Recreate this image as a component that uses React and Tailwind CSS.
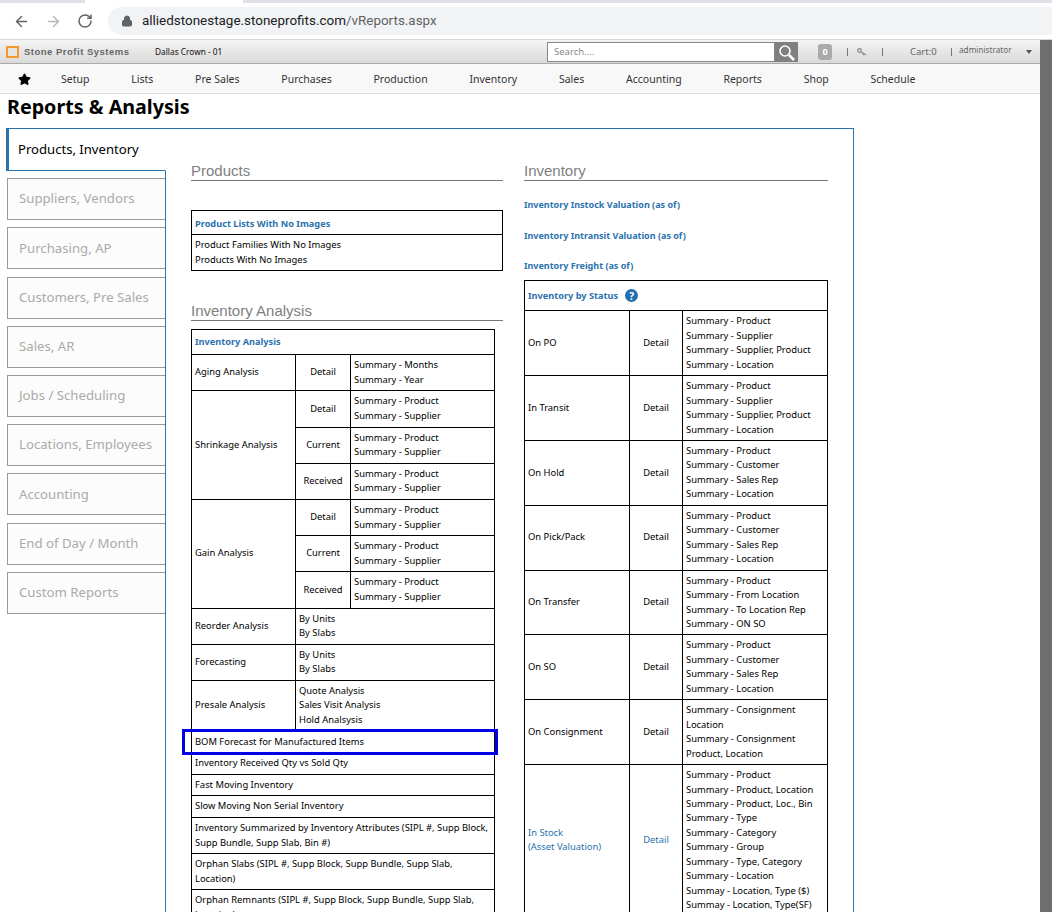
import React from 'react';
import { ArrowLeft, ArrowRight, RotateCw, Lock, Star } from 'lucide-react';

const navItems = ['Setup', 'Lists', 'Pre Sales', 'Purchases', 'Production', 'Inventory', 'Sales', 'Accounting', 'Reports', 'Shop', 'Schedule'];

const sideItems = [
  'Suppliers, Vendors',
  'Purchasing, AP',
  'Customers, Pre Sales',
  'Sales, AR',
  'Jobs / Scheduling',
  'Locations, Employees',
  'Accounting',
  'End of Day / Month',
  'Custom Reports',
];

const rightRows = [
  ['On PO', ['Product', 'Supplier', 'Supplier, Product', 'Location']],
  ['In Transit', ['Product', 'Supplier', 'Supplier, Product', 'Location']],
  ['On Hold', ['Product', 'Customer', 'Sales Rep', 'Location']],
  ['On Pick/Pack', ['Product', 'Customer', 'Sales Rep', 'Location']],
  ['On Transfer', ['Product', 'From Location', 'To Location Rep', 'ON SO']],
  ['On SO', ['Product', 'Customer', 'Sales Rep', 'Location']],
];

const cell = 'border border-black px-[3px] py-[3px] align-middle';

const Lines = ({ items }) => (
  <>
    {items.map((t, i) => (
      <div key={i}>{t}</div>
    ))}
  </>
);

const SectionTitle = ({ children, className }) => (
  <div className={`border-b border-[#777] text-[15px] leading-[18px] text-[#808080] font-['Liberation_Sans',sans-serif] ${className}`}>
    {children}
  </div>
);

const Divider = ({ className }) => <div className={`h-[8px] w-px bg-[#777] ${className}`}></div>;

const App = () => {
  return (
    <div className="relative h-[912px] w-[1052px] overflow-hidden bg-white font-['Noto_Sans',sans-serif] text-[9.4px] leading-[14.6px] text-black">
      {/* browser chrome */}
      <div className="relative h-[3px] bg-[#dee1e6]">
        <div className="absolute left-[85px] top-0 h-[3px] w-[158px] bg-white"></div>
      </div>
      <div className="flex h-[37px] items-center border-b border-[#d8d8d8] bg-white">
        <ArrowLeft size={17} strokeWidth={2} className="ml-[13px] text-[#5f6368]" />
        <ArrowRight size={17} strokeWidth={2} className="ml-[15px] text-[#b5b7ba]" />
        <RotateCw size={16} strokeWidth={2.2} className="ml-[15px] text-[#5f6368]" />
        <div className="ml-[15px] flex h-[28px] flex-1 items-center rounded-l-full bg-[#f1f3f4] pl-[13px] font-['Roboto',sans-serif] text-[13.45px] text-[#202124]">
          <Lock size={12} fill="#5f6368" className="text-[#5f6368]" />
          <span className="ml-[9px]">
            alliedstonestage.stoneprofits.com<span className="text-[#5f6368]">/vReports.aspx</span>
          </span>
        </div>
      </div>

      {/* top bar */}
      <div className="flex h-[24px] items-center border-b border-[#aaa] bg-gradient-to-b from-[#f4f4f4] to-[#d9d9d9] pt-[1px]">
        <div className="flex w-[155px] items-center pl-[6px]">
          <div className="h-[12px] w-[13px] border-2 border-[#f39a2b] bg-[#e4e4e4]"></div>
          <div className="ml-[5px] font-['Liberation_Sans',sans-serif] text-[9.5px] font-bold tracking-[0.5px] text-[#666]">Stone Profit Systems</div>
        </div>
        <div className="w-[392px] text-[8.3px] text-[#111]">Dallas Crown - 01</div>
        <div className="flex h-[20px] w-[228px] items-center border border-[#888] bg-white pl-[6px] text-[9.5px] text-[#888]">
          Search....
        </div>
        <div className="flex h-[20px] w-[23px] items-center justify-center bg-[#7f7f7f]">
          <svg width="19" height="19" viewBox="0 0 19 19" fill="none" stroke="white">
            <circle cx="8" cy="8" r="5" strokeWidth="1.6" />
            <path d="M12 12l5 5" strokeWidth="2.6" />
          </svg>
        </div>
        <div className="ml-[20px] flex h-[16px] w-[14px] items-center justify-center rounded-[3px] bg-[#aaa] text-[9px] font-bold text-white">0</div>
        <Divider className="ml-[15px]" />
        <svg width="11" height="8" viewBox="0 0 11 8" fill="none" stroke="#888" className="ml-[9px]">
          <circle cx="2.5" cy="2.5" r="1.8" strokeWidth="1.2" />
          <path d="M4 4l5 3M7 5.5l-1 1.5" strokeWidth="1.2" />
        </svg>
        <Divider className="ml-[14px]" />
        <div className="ml-[27px] w-[41px] text-[9.5px] text-[#666]">Cart:0</div>
        <Divider />
        <div className="-mt-[3px] ml-[7px] w-[67px] text-[8.2px] text-[#666]">administrator</div>
        <div className="h-0 w-0 border-x-[3.5px] border-t-[4px] border-x-transparent border-t-[#555]"></div>
      </div>

      {/* nav */}
      <div className="flex h-[30px] items-center border-b border-[#ddd] bg-[#f8f8f8] pt-[1px] text-[10.5px] text-[#333]">
        <Star size={13} fill="black" className="ml-[18px] mr-[30px] text-black" />
        <div className="flex gap-[41.8px]">
          {navItems.map((label) => (
            <div key={label}>{label}</div>
          ))}
        </div>
      </div>

      {/* scrollbar strip */}
      <div className="absolute right-0 top-[40px] h-[872px] w-[12px] bg-[#6e6e6e]"></div>

      <h1 className="ml-[7px] mt-[1px] h-[33px] text-[19.7px] font-bold leading-[24px] text-black">Reports &amp; Analysis</h1>

      {/* report box */}
      <div className="ml-[6px] flex h-[800px] w-[848px] border-r border-t border-[#2a72ae]">
        <div className="w-[160px] shrink-0 border-r border-[#2a72ae]">
          <div className="-mr-[1px] flex h-[42px] items-center border-b border-l-[3px] border-r border-[#2a72ae] border-r-white bg-white pl-[9px] text-[13.1px] text-black">
            Products, Inventory
          </div>
          {sideItems.map((s) => (
            <div key={s} className="ml-[1px] mt-[7.2px] flex h-[42px] items-center border-y border-l border-[#999] bg-[#fcfcfc] pb-[1px] pl-[11px] text-[13.2px] text-[#aaa]">
              {s}
            </div>
          ))}
        </div>

        <div className="flex min-w-0 flex-1">
          {/* left column */}
          <div className="ml-[25px] w-[312px]">
            <SectionTitle className="mt-[33px]">Products</SectionTitle>
            <table className="mt-[29px] w-[312px] border-collapse">
              <tbody>
                <tr>
                  <td className="h-[24px] border border-black px-[3px] pb-[1px] pt-[5px] text-[9.2px] font-bold text-[#2a72ae]">Product Lists With No Images</td>
                </tr>
                <tr>
                  <td className={cell}>
                    <div>Product Families With No Images</div>
                    <div>Products With No Images</div>
                  </td>
                </tr>
              </tbody>
            </table>

            <SectionTitle className="mt-[31px]">Inventory Analysis</SectionTitle>
            <table className="mt-[8px] w-[304px] table-fixed border-collapse">
              <colgroup>
                <col className="w-[104px]" />
                <col className="w-[55px]" />
                <col />
              </colgroup>
              <tbody>
                <tr>
                  <td colSpan={3} className="h-[25px] border border-black px-[3px] text-[9.2px] font-bold text-[#2a72ae]">Inventory Analysis</td>
                </tr>
                <tr>
                  <td className={cell}>Aging Analysis</td>
                  <td className={`${cell} text-center`}>Detail</td>
                  <td className={cell}><Lines items={['Summary - Months', 'Summary - Year']} /></td>
                </tr>
                {['Shrinkage Analysis', 'Gain Analysis'].map((name) =>
                  ['Detail', 'Current', 'Received'].map((d, i) => (
                    <tr key={name + d}>
                      {i === 0 && <td rowSpan={3} className={cell}>{name}</td>}
                      <td className={`${cell} text-center`}>{d}</td>
                      <td className={cell}><Lines items={['Summary - Product', 'Summary - Supplier']} /></td>
                    </tr>
                  ))
                )}
                <tr>
                  <td className={cell}>Reorder Analysis</td>
                  <td colSpan={2} className={cell}><Lines items={['By Units', 'By Slabs']} /></td>
                </tr>
                <tr>
                  <td className={cell}>Forecasting</td>
                  <td colSpan={2} className={cell}><Lines items={['By Units', 'By Slabs']} /></td>
                </tr>
                <tr>
                  <td className={cell}>Presale Analysis</td>
                  <td colSpan={2} className={cell}><Lines items={['Quote Analysis', 'Sales Visit Analysis', 'Hold Analsysis']} /></td>
                </tr>
                {['BOM Forecast for Manufactured Items', 'Inventory Received Qty vs Sold Qty', 'Fast Moving Inventory', 'Slow Moving Non Serial Inventory', 'Inventory Summarized by Inventory Attributes (SIPL #, Supp Block, Supp Bundle, Supp Slab, Bin #)', 'Orphan Slabs (SIPL #, Supp Block, Supp Bundle, Supp Slab, Location)', 'Orphan Remnants (SIPL #, Supp Block, Supp Bundle, Supp Slab, Location)'].map((t) => (
                  <tr key={t}>
                    <td colSpan={3} className={cell}>{t}</td>
                  </tr>
                ))}
              </tbody>
            </table>
          </div>

          {/* right column */}
          <div className="ml-[21px] w-[304px] leading-[14.45px]">
            <SectionTitle className="mt-[33px]">Inventory</SectionTitle>
            <div className="mt-[17px] text-[9px] font-bold text-[#2a72ae]">Inventory Instock Valuation (as of)</div>
            <div className="mt-[17px] text-[9px] font-bold text-[#2a72ae]">Inventory Intransit Valuation (as of)</div>
            <div className="mt-[15px] text-[9px] font-bold text-[#2a72ae]">Inventory Freight (as of)</div>
            <table className="mt-[7px] w-[304px] table-fixed border-collapse">
              <colgroup>
                <col className="w-[105px]" />
                <col className="w-[53px]" />
                <col />
              </colgroup>
              <tbody>
                <tr>
                  <td colSpan={3} className="h-[30px] border border-black px-[3px] text-[9.2px] font-bold text-[#2a72ae]">
                    <span className="inline-flex items-center">
                      Inventory by Status
                      <span className="ml-[7px] flex h-[13px] w-[13px] items-center justify-center rounded-full bg-[#1f6fb2] text-[10px] font-bold text-white">?</span>
                    </span>
                  </td>
                </tr>
                {rightRows.map(([name, items]) => (
                  <tr key={name}>
                    <td className={cell}>{name}</td>
                    <td className={`${cell} text-center`}>Detail</td>
                    <td className={cell}><Lines items={items.map((x) => `Summary - ${x}`)} /></td>
                  </tr>
                ))}
                <tr>
                  <td className={cell}>On Consignment</td>
                  <td className={`${cell} text-center`}>Detail</td>
                  <td className={cell}><Lines items={['Summary - Consignment', 'Location', 'Summary - Consignment', 'Product, Location']} /></td>
                </tr>
                <tr>
                  <td className={`${cell} text-[#2a72ae]`}>
                    <div>In Stock</div>
                    <div>(Asset Valuation)</div>
                  </td>
                  <td className={`${cell} text-center text-[#2a72ae]`}>Detail</td>
                  <td className={cell}>
                    <Lines items={['Summary - Product', 'Summary - Product, Location', 'Summary - Product, Loc., Bin', 'Summary - Type', 'Summary - Category', 'Summary - Group', 'Summary - Type, Category', 'Summary - Location', 'Summay - Location, Type ($)', 'Summay - Location, Type(SF)']} />
                  </td>
                </tr>
              </tbody>
            </table>
          </div>
        </div>
      </div>

      {/* highlight drawn on top of the screenshot */}
      <div className="absolute left-[182px] top-[729px] h-[26px] w-[316px] border-[3px] border-[#0000e6]"></div>
    </div>
  );
};

export default App;
